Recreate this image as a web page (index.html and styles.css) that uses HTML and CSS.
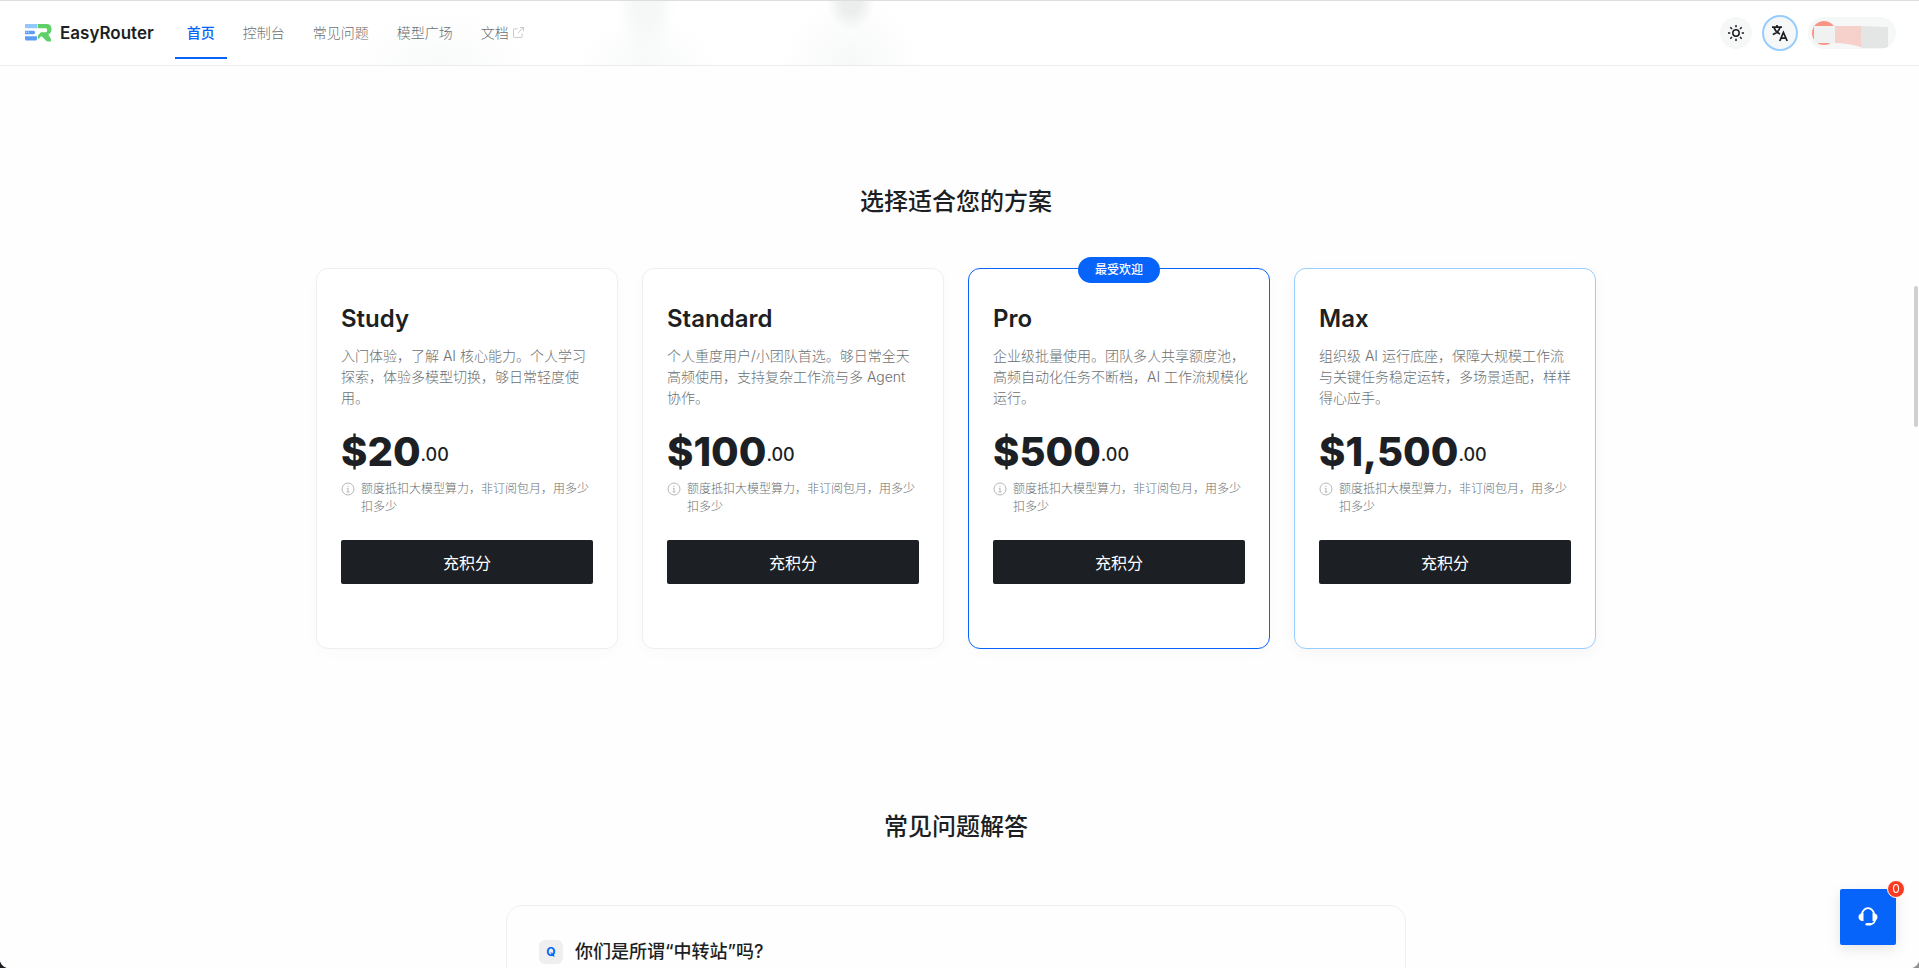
FILE: index.html
```html
<!DOCTYPE html>
<html lang="zh-CN">
<head>
<meta charset="utf-8">
<title>EasyRouter</title>
<link rel="stylesheet" href="styles.css">
</head>
<body>
<header class="topbar">
  <a class="brand" href="#">
    <svg class="brand-logo" width="28" height="20" viewBox="0 0 28 20" aria-hidden="true">
      <path d="M1 1h12.500v4.200H1z" fill="#93c8fd"/>
      <path d="M1 7.700h8.800q1.200 0 1.200 1.700T9.800 11.300H1z" fill="#5b9cf8"/>
      <path d="M2 9.200h3" stroke="#fff" stroke-width="0.800" stroke-dasharray="1 1"/>
      <path d="M1 13.300h12V16q0 1.500-1.500 1.500H2.500Q1 17.500 1 16z" fill="#5b9cf8"/>
      <path d="M14 1h8.500Q27.500 1 27.500 6.300q0 4-3.200 5.300L27 16v2.500h-4L17.300 13 14 16.500V12.500l2.800-3.300h5q1.400 0 1.400-2T21.800 5.200H14z" fill="#5fd068"/>
    </svg>
    <span>EasyRouter</span>
  </a>
  <nav class="nav">
    <a class="nav-item active" href="#">首页</a>
    <a class="nav-item" href="#">控制台</a>
    <a class="nav-item" href="#">常见问题</a>
    <a class="nav-item" href="#">模型广场</a>
    <a class="nav-item" href="#">文档
      <svg width="11" height="11" viewBox="0 0 12 12" fill="none" stroke="#c2c5c5" aria-hidden="true"><path d="M5 2H1.500Q.5 2 .5 3v7.500q0 1 1 1H9q1 0 1-1V7M7.500.5h4v4M11.500.5 5.500 6.500"/></svg>
    </a>
  </nav>
  <div class="tools">
    <button class="round" type="button" aria-label="主题">
      <svg width="18" height="18" viewBox="0 0 18 18" fill="none" stroke="#1c1f23" stroke-width="1.500" aria-hidden="true"><circle cx="9" cy="9" r="3.200"/><path d="M9 1v2.300M9 14.700V17M1 9h2.300M14.700 9H17M3.300 3.300 5 5M13 13l1.700 1.700M3.300 14.700 5 13M13 5l1.700-1.700"/></svg>
    </button>
    <button class="round lang" type="button" aria-label="语言">
      <svg width="18" height="18" viewBox="0 0 18 18" fill="none" stroke="#1c1f23" stroke-width="1.700" aria-hidden="true"><path d="M1 3.200h10M6 1v2.200M9 3.500Q7.500 8.500 1.800 10.500M3 3.500q1.500 4.500 6 6.500"/><path d="m8.800 17 3.600-8.700L16.200 17M10 14.200h5"/></svg>
    </button>
    <button class="account" type="button" aria-label="账户">
      <svg width="88" height="32" viewBox="0 0 88 32" aria-hidden="true">
        <circle cx="16" cy="16" r="12" fill="#fb9484"/>
        <path d="M6 9h21v17H6z" fill="#f0f1f1"/>
        <path d="M27 9h26v21q-14-4-26-4z" fill="#f6d1cc"/>
        <path d="M53 9l27 1v21H53z" fill="#e3e6e5"/>
      </svg>
    </button>
  </div>
</header>

<main class="page">
  <section class="pricing">
    <h2 class="section-title">选择适合您的方案</h2>
    <div class="plans">
      <article class="plan">
        <h3 class="plan-name">Study</h3>
        <p class="plan-desc">入门体验，了解 AI 核心能力。个人学习<br>探索，体验多模型切换，够日常轻度使<br>用。</p>
        <p class="price">$20<span class="cents">.00</span></p>
        <p class="note"><svg class="info" width="14" height="14" viewBox="0 0 14 14" aria-hidden="true"><circle cx="7" cy="7" r="6"/><path d="M7 6v4M7 3.800v1.200M5.800 6.300H7M5.500 10h3"/></svg><span>额度抵扣大模型算力，非订阅包月，用多少扣多少</span></p>
        <button class="buy" type="button">充积分</button>
      </article>
      <article class="plan">
        <h3 class="plan-name">Standard</h3>
        <p class="plan-desc">个人重度用户/小团队首选。够日常全天<br>高频使用，支持复杂工作流与多 Agent<br>协作。</p>
        <p class="price">$100<span class="cents">.00</span></p>
        <p class="note"><svg class="info" width="14" height="14" viewBox="0 0 14 14" aria-hidden="true"><circle cx="7" cy="7" r="6"/><path d="M7 6v4M7 3.800v1.200M5.800 6.300H7M5.500 10h3"/></svg><span>额度抵扣大模型算力，非订阅包月，用多少扣多少</span></p>
        <button class="buy" type="button">充积分</button>
      </article>
      <article class="plan popular">
        <span class="ribbon">最受欢迎</span>
        <h3 class="plan-name">Pro</h3>
        <p class="plan-desc">企业级批量使用。团队多人共享额度池，<br>高频自动化任务不断档，AI 工作流规模化<br>运行。</p>
        <p class="price">$500<span class="cents">.00</span></p>
        <p class="note"><svg class="info" width="14" height="14" viewBox="0 0 14 14" aria-hidden="true"><circle cx="7" cy="7" r="6"/><path d="M7 6v4M7 3.800v1.200M5.800 6.300H7M5.500 10h3"/></svg><span>额度抵扣大模型算力，非订阅包月，用多少扣多少</span></p>
        <button class="buy" type="button">充积分</button>
      </article>
      <article class="plan max">
        <h3 class="plan-name">Max</h3>
        <p class="plan-desc">组织级 AI 运行底座，保障大规模工作流<br>与关键任务稳定运转，多场景适配，样样<br>得心应手。</p>
        <p class="price">$1,500<span class="cents">.00</span></p>
        <p class="note"><svg class="info" width="14" height="14" viewBox="0 0 14 14" aria-hidden="true"><circle cx="7" cy="7" r="6"/><path d="M7 6v4M7 3.800v1.200M5.800 6.300H7M5.500 10h3"/></svg><span>额度抵扣大模型算力，非订阅包月，用多少扣多少</span></p>
        <button class="buy" type="button">充积分</button>
      </article>
    </div>
  </section>

  <section class="faq">
    <h2 class="section-title">常见问题解答</h2>
    <div class="faq-card">
      <span class="q-mark">Q</span>
      <h3 class="question">你们是所谓“中转站”吗?</h3>
    </div>
  </section>
</main>

<button class="support" type="button" aria-label="客服">
  <svg width="22" height="22" viewBox="0 0 22 22" aria-hidden="true">
    <path d="M5 8.500a6 6.300 0 0 1 12 0M18 14q-.5 4-5.500 4.300" fill="none" stroke="#fff" stroke-width="1.800"/>
    <path d="M6.500 7v8H5Q1.500 14 1.500 11T5 7zM15.500 7v8H17q3.500-1 3.500-4T17 7z" fill="#fff"/>
    <rect x="8.500" y="17" width="6" height="2.600" rx="1.300" fill="#fff"/>
  </svg>
  <span class="count">0</span>
</button>
<div class="scroll-thumb"></div>
<div class="corner left"></div>
<div class="corner right"></div>
</body>
</html>
```
FILE: styles.css
```css
* { box-sizing: border-box; }

body {
  margin: 0;
  height: 100vh;
  overflow: hidden;
  display: flex;
  flex-direction: column;
  background: #fefefe;
  color: #1c1f23;
  font-family: Inter, "Noto Sans CJK SC", sans-serif;
  font-size: 14px;
}

h2, h3, p { margin: 0; }
a { color: inherit; text-decoration: none; }
button { font: inherit; border: 0; padding: 0; cursor: pointer; }
svg { display: block; flex: none; }

.topbar {
  flex: none;
  height: 66px;
  padding: 0 23px 0 24px;
  display: flex;
  align-items: center;
  border-top: 1px solid #dcdddd;
  border-bottom: 1px solid #ebecec;
  background:
    radial-gradient(ellipse 24px 30px at 851px 0, #eceded 40%, transparent),
    radial-gradient(ellipse 70px 70px at 851px 66px, #f6f8f7, transparent),
    radial-gradient(ellipse 30px 60px at 646px 0, #f5f8f7 40%, transparent),
    radial-gradient(ellipse 70px 50px at 646px 66px, #f7f9f8, transparent),
    radial-gradient(ellipse 90px 60px at 440px 66px, #f8faf9, transparent),
    #ffffff;
}

.brand {
  display: flex;
  align-items: center;
  gap: 8px;
  font-size: 17px;
  font-weight: 600;
}

.nav {
  display: flex;
  gap: 4px;
  margin-left: 21px;
}

.nav-item {
  height: 52px;
  padding: 0 12px;
  display: flex;
  align-items: center;
  gap: 4px;
  color: #6c6f70;
  font-weight: 300;
  border-bottom: 2px solid transparent;
}

.nav-item.active {
  color: #0664fa;
  font-weight: 500;
  border-bottom-color: #0664fa;
}

.tools {
  margin-left: auto;
  display: flex;
  align-items: center;
  gap: 10px;
}

.round {
  width: 32px;
  height: 32px;
  border-radius: 50%;
  background: #f6f7f7;
  display: grid;
  place-items: center;
}

.round.lang {
  width: 36px;
  height: 36px;
  border: 2px solid #98cdfd;
}

.account {
  border-radius: 16px;
  overflow: hidden;
  background: #f6f7f7;
}

.page {
  flex: 1;
  min-height: 0;
  overflow: hidden;
  padding: 118px 7px 0 0;
}

.section-title {
  font-size: 24px;
  line-height: 36px;
  font-weight: 500;
  text-align: center;
}

.plans {
  max-width: 1280px;
  margin: 48px auto 0;
  display: grid;
  grid-template-columns: repeat(4, minmax(0, 1fr));
  gap: 24px;
}

.plan {
  position: relative;
  padding: 32px 24px 64px;
  border: 1px solid #eeefef;
  border-radius: 12px;
  background: #ffffff;
  box-shadow: 0 4px 16px rgba(0, 0, 0, 0.02);
}

.plan.popular { border-color: #0664fa; }

.plan.max {
  border-color: #98cdfd;
  box-shadow: 0 4px 16px rgba(0, 0, 0, 0.04);
}

.ribbon {
  position: absolute;
  top: 1px;
  left: 50%;
  transform: translate(-50%, -50%);
  padding: 4px 17px;
  border-radius: 13px;
  background: #0664fa;
  color: #ffffff;
  font-size: 12px;
  line-height: 18px;
  font-weight: 500;
  white-space: nowrap;
}

.plan-name {
  font-size: 24px;
  line-height: 36px;
  font-weight: 600;
}

.plan-desc {
  margin-top: 8px;
  color: #6c6f70;
  line-height: 21px;
  font-weight: 300;
  white-space: nowrap;
}

.price {
  margin-top: 24px;
  display: flex;
  align-items: center;
  font-size: 40px;
  line-height: 40px;
  font-weight: 800;
}

.cents {
  padding-top: 6px;
  font-size: 18px;
  line-height: 28px;
  font-weight: 500;
}

.note {
  margin-top: 8px;
  display: flex;
  gap: 6px;
  color: #6c6f70;
  font-size: 12px;
  line-height: 18px;
  font-weight: 300;
}

.info {
  margin-top: 2px;
  fill: none;
  stroke: #b5b8b8;
}

.buy {
  width: 100%;
  height: 44px;
  margin-top: 24px;
  border-radius: 2px;
  background: #1c1f23;
  color: #ffffff;
  font-size: 16px;
  font-weight: 400;
}

.faq {
  padding: 160px 24px 0;
}

.faq-card {
  max-width: 900px;
  min-height: 240px;
  margin: 60px auto 0;
  padding: 32px;
  display: flex;
  align-items: flex-start;
  gap: 12px;
  border: 1px solid #eeefef;
  border-radius: 16px;
}

.q-mark {
  width: 24px;
  height: 24px;
  margin-top: 2px;
  border-radius: 6px;
  background: #efefef;
  color: #0664fa;
  font-size: 12px;
  line-height: 24px;
  font-weight: 700;
  text-align: center;
}

.question {
  font-size: 18px;
  line-height: 28px;
  font-weight: 500;
}

.support {
  position: fixed;
  right: 23px;
  bottom: 23px;
  width: 56px;
  height: 56px;
  border-radius: 2px;
  background: #0664fa;
  display: grid;
  place-items: center;
  box-shadow: 0 4px 14px rgba(0, 0, 0, 0.1);
}

.count {
  position: absolute;
  top: -9px;
  right: -9px;
  width: 18px;
  height: 18px;
  border: 1px solid #ffffff;
  border-radius: 50%;
  background: #fb3a20;
  color: #ffffff;
  font-size: 12px;
  line-height: 16px;
}

.scroll-thumb {
  position: fixed;
  right: 1px;
  top: 286px;
  width: 4px;
  height: 141px;
  border-radius: 2px;
  background: #cfd1d0;
}

.corner {
  position: fixed;
  bottom: 0;
  width: 10px;
  height: 10px;
}

.corner.left {
  left: 0;
  background: radial-gradient(circle at 100% 0, transparent 10px, #1c1f23 11px);
}

.corner.right {
  right: 0;
  background: radial-gradient(circle at 0 0, transparent 10px, #8f9191 11px);
}
```
